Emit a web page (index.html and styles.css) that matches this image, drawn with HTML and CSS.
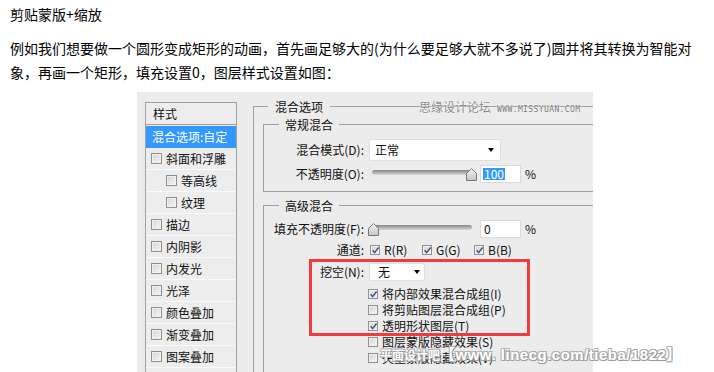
FILE: index.html
```html
<!DOCTYPE html>
<html lang="zh-CN">
<head>
    <meta charset="UTF-8">
    <meta name="viewport" content="width=device-width, initial-scale=1.0">
    <title>剪贴蒙版+缩放</title>
    <link rel="stylesheet" href="styles.css">
</head>
<body>

    <p class="title">剪贴蒙版+缩放</p>
    <p class="text">例如我们想要做一个圆形变成矩形的动画，首先画足够大的(为什么要足够大就不多说了)圆并将其转换为智能对象，再画一个矩形，填充设置0，图层样式设置如图：</p>

    <div class="figure">
        <div class="dialog">
            <div class="style-list">
                <div class="style-head">样式</div>
                <div class="style-item active">混合选项:自定</div>
                <div class="style-item"><span class="box"></span>斜面和浮雕</div>
                <div class="style-item sub"><span class="box"></span>等高线</div>
                <div class="style-item sub"><span class="box"></span>纹理</div>
                <div class="style-item"><span class="box"></span>描边</div>
                <div class="style-item"><span class="box"></span>内阴影</div>
                <div class="style-item"><span class="box"></span>内发光</div>
                <div class="style-item"><span class="box"></span>光泽</div>
                <div class="style-item"><span class="box"></span>颜色叠加</div>
                <div class="style-item"><span class="box"></span>渐变叠加</div>
                <div class="style-item"><span class="box"></span>图案叠加</div>
                <div class="style-item"></div>
            </div>

            <div class="options">
                <div class="legend">混合选项</div>

                <div class="group">
                    <div class="legend">常规混合</div>
                    <div class="row first">
                        <span class="label">混合模式(D):</span>
                        <span class="select mode">正常<i class="caret"></i></span>
                    </div>
                    <div class="row">
                        <span class="label">不透明度(O):</span>
                        <span class="slider">
                            <span class="track"></span>
                            <svg class="thumb thumb-max" width="11" height="13" viewBox="0 0 11 13"><defs><linearGradient id="tg1" x1="0" y1="0" x2="0" y2="1"><stop offset="0" stop-color="#f4f4f4"/><stop offset="1" stop-color="#c4c4c4"/></linearGradient></defs><path d="M0.5 12.5 V5.5 L5.5 0.5 L10.5 5.5 V12.5 Z" fill="url(#tg1)" stroke="#777"/></svg>
                        </span>
                        <span class="field"><span class="selected">100</span></span>
                        <span class="pct">%</span>
                    </div>
                </div>

                <div class="group advanced">
                    <div class="legend">高级混合</div>
                    <div class="row fill">
                        <span class="label">填充不透明度(F):</span>
                        <span class="slider">
                            <span class="track"></span>
                            <svg class="thumb thumb-min" width="11" height="13" viewBox="0 0 11 13"><defs><linearGradient id="tg2" x1="0" y1="0" x2="0" y2="1"><stop offset="0" stop-color="#f4f4f4"/><stop offset="1" stop-color="#c4c4c4"/></linearGradient></defs><path d="M0.5 12.5 V5.5 L5.5 0.5 L10.5 5.5 V12.5 Z" fill="url(#tg2)" stroke="#777"/></svg>
                        </span>
                        <span class="field"><span class="value">0</span></span>
                        <span class="pct">%</span>
                    </div>
                    <div class="row channels-row">
                        <span class="label">通道:</span>
                        <span class="channels">
                            <span class="channel"><span class="box checked"><svg viewBox="0 0 10 10"><path d="M1.8 4.8 L4 7.4 L8.4 1.6" fill="none" stroke="#3d4f8c" stroke-width="1.6"/></svg></span>R(R)</span>
                            <span class="channel"><span class="box checked"><svg viewBox="0 0 10 10"><path d="M1.8 4.8 L4 7.4 L8.4 1.6" fill="none" stroke="#3d4f8c" stroke-width="1.6"/></svg></span>G(G)</span>
                            <span class="channel"><span class="box checked"><svg viewBox="0 0 10 10"><path d="M1.8 4.8 L4 7.4 L8.4 1.6" fill="none" stroke="#3d4f8c" stroke-width="1.6"/></svg></span>B(B)</span>
                        </span>
                    </div>
                    <div class="row knockout-row">
                        <span class="label">挖空(N):</span>
                        <span class="select knockout">无<i class="caret"></i></span>
                    </div>
                    <div class="checks">
                        <div class="check-row"><span class="box checked"><svg viewBox="0 0 10 10"><path d="M1.8 4.8 L4 7.4 L8.4 1.6" fill="none" stroke="#3d4f8c" stroke-width="1.6"/></svg></span>将内部效果混合成组(I)</div>
                        <div class="check-row"><span class="box"></span>将剪贴图层混合成组(P)</div>
                        <div class="check-row"><span class="box checked"><svg viewBox="0 0 10 10"><path d="M1.8 4.8 L4 7.4 L8.4 1.6" fill="none" stroke="#3d4f8c" stroke-width="1.6"/></svg></span>透明形状图层(T)</div>
                        <div class="check-row"><span class="box"></span>图层蒙版隐藏效果(S)</div>
                        <div class="check-row"><span class="box"></span>矢量蒙版隐藏效果(V)</div>
                    </div>
                </div>
            </div>
        </div>

        <div class="mark-top"><span>思缘设计论坛</span><span class="site">WWW.MISSYUAN.COM</span></div>
        <div class="highlight"></div>
        <div class="mark-bottom"><span class="mark-cn">平面设计吧</span>【www. linecg.com/tieba/1822】</div>
    </div>

</body>
</html>
```

FILE: styles.css
```css
body {
    margin: 0;
    font-family: "Noto Sans CJK SC", "Liberation Sans", sans-serif;
    color: #000;
}
.title {
    margin: 2px 10px 0;
    font-size: 14px;
    line-height: 24px;
}
.text {
    margin: 10px 10px 0;
    width: 692px;
    font-size: 14px;
    line-height: 24px;
}

/* screenshot of the layer style dialog */
.figure {
    position: relative;
    margin: 8px 0 0 137px;
    width: 456px;
}
.dialog {
    display: flex;
    align-items: flex-start;
    height: 280px;
    overflow: hidden;
    background: #ececec;
    font-size: 12px;
    line-height: 16px;
    color: #111;
}

.style-list {
    flex: none;
    width: 92px;
    margin: 10px 0 0 8px;
    box-sizing: border-box;
    border: 1px solid #a0a0a0;
    border-bottom: none;
    background: #ededed;
}
.style-head {
    height: 21px;
    line-height: 21px;
    padding-left: 7px;
    border-bottom: 1px solid #a0a0a0;
    margin-bottom: 1px;
}
.style-item {
    display: flex;
    align-items: center;
    height: 22px;
    box-sizing: border-box;
    padding-left: 5px;
    border-bottom: 1px solid #fafafa;
    white-space: nowrap;
}
.style-item.active {
    background: #3399ff;
    color: #fff;
    padding-left: 6px;
    border-bottom: none;
}
.style-item.sub {
    padding-left: 20px;
}
.box {
    flex: none;
    width: 11px;
    height: 11px;
    box-sizing: border-box;
    margin-right: 4px;
    border: 1px solid #8f8f8f;
    background: linear-gradient(135deg, #d4d4d4, #f6f6f6);
    box-shadow: inset 0 0 0 1px #f2f2f2;
}
.box svg {
    display: block;
    width: 9px;
    height: 9px;
}

.options {
    flex: 1;
    height: 300px;
    margin: 14px 0 0 16px;
    border-top: 1px solid #a0a0a0;
    border-left: 1px solid #a0a0a0;
}
.legend {
    width: max-content;
    margin: -8px 0 0 14px;
    padding: 0 7px;
    background: #ececec;
    line-height: 16px;
}
.group {
    margin: 9px 0 0 9px;
    padding-bottom: 6px;
    border: 1px solid #a0a0a0;
    border-right: none;
}
.group .legend {
    margin-left: 15px;
    padding: 0 6px;
}
.group.advanced {
    margin-top: 13px;
    border-bottom: none;
    height: 200px;
}

.row {
    display: flex;
    align-items: center;
    height: 22px;
    margin-top: 2px;
    white-space: nowrap;
}
.row.first {
    margin-top: 6px;
}
.row.fill {
    height: 20px;
    margin-top: 5px;
}
.row.channels-row {
    height: 18px;
}
.row.knockout-row {
    height: 18px;
    margin-top: 4px;
}
.label {
    flex: none;
    width: 100px;
    text-align: right;
}

.select {
    position: relative;
    box-sizing: border-box;
    height: 22px;
    margin-left: 5px;
    padding-left: 5px;
    line-height: 20px;
    background: #fff;
    border: 1px solid #e0e0e0;
    border-radius: 2px;
}
.select.mode {
    width: 132px;
}
.select.knockout {
    width: 56px;
    height: 18px;
    line-height: 16px;
    padding-left: 8px;
}
.caret {
    position: absolute;
    top: 50%;
    right: 6px;
    margin-top: -2px;
    border-left: 3px solid transparent;
    border-right: 3px solid transparent;
    border-top: 4px solid #000;
}
.knockout .caret {
    right: 4px;
}

.slider {
    position: relative;
    flex: none;
    width: 100px;
    height: 14px;
    margin-left: 8px;
}
.track {
    display: block;
    margin-top: 3px;
    height: 5px;
    border-radius: 3px;
    background: linear-gradient(#878787, #d8d8d8);
}
.thumb {
    position: absolute;
    top: 1px;
}
.thumb-max {
    left: 94px;
}
.thumb-min {
    left: -4px;
}
.field {
    display: flex;
    align-items: center;
    box-sizing: border-box;
    width: 41px;
    height: 18px;
    margin-left: 8px;
    padding-left: 2px;
    background: #fff;
    border: 1px solid #dadada;
}
.selected {
    padding: 0 1px;
    line-height: 12px;
    background: #3399ff;
    color: #fff;
}
.value {
    padding-left: 1px;
}
.pct {
    margin-left: 4px;
}

.channels {
    display: flex;
    margin-left: 6px;
}
.channel {
    display: flex;
    align-items: center;
    width: 52px;
}
.channel .box,
.check-row .box {
    width: 10px;
    height: 10px;
    margin-right: 4px;
}
.checks {
    margin: 5px 0 0 104px;
}
.check-row {
    display: flex;
    align-items: center;
    height: 16px;
    white-space: nowrap;
}

/* annotations laid over the picture */
.highlight {
    position: absolute;
    left: 172px;
    top: 167px;
    width: 221px;
    height: 77px;
    box-sizing: border-box;
    border: 3px solid #f03c3c;
}
.mark-top {
    position: absolute;
    left: 282px;
    top: 7px;
    display: flex;
    align-items: baseline;
    gap: 6px;
    font-size: 12px;
    line-height: 16px;
    color: #8a8a8a;
    text-shadow: 0 0 2px #fff, 0 0 1px #fff;
    white-space: nowrap;
}
.site {
    font-family: "DejaVu Sans Mono", monospace;
    font-size: 8px;
    letter-spacing: 0.4px;
    color: #777;
}
.mark-bottom {
    position: absolute;
    left: 243px;
    top: 254px;
    font-family: "Liberation Sans", "Noto Sans CJK SC", sans-serif;
    font-size: 15px;
    font-weight: bold;
    line-height: 18px;
    letter-spacing: 0.5px;
    color: #fff;
    white-space: nowrap;
    text-shadow: 1px 1px 0 #999, -1px -1px 0 #b4b4b4, 1px -1px 0 #a8a8a8, -1px 1px 0 #a8a8a8;
}
.mark-cn {
    font-family: "Noto Sans CJK SC", sans-serif;
    font-size: 12px;
    letter-spacing: 0;
}
```
